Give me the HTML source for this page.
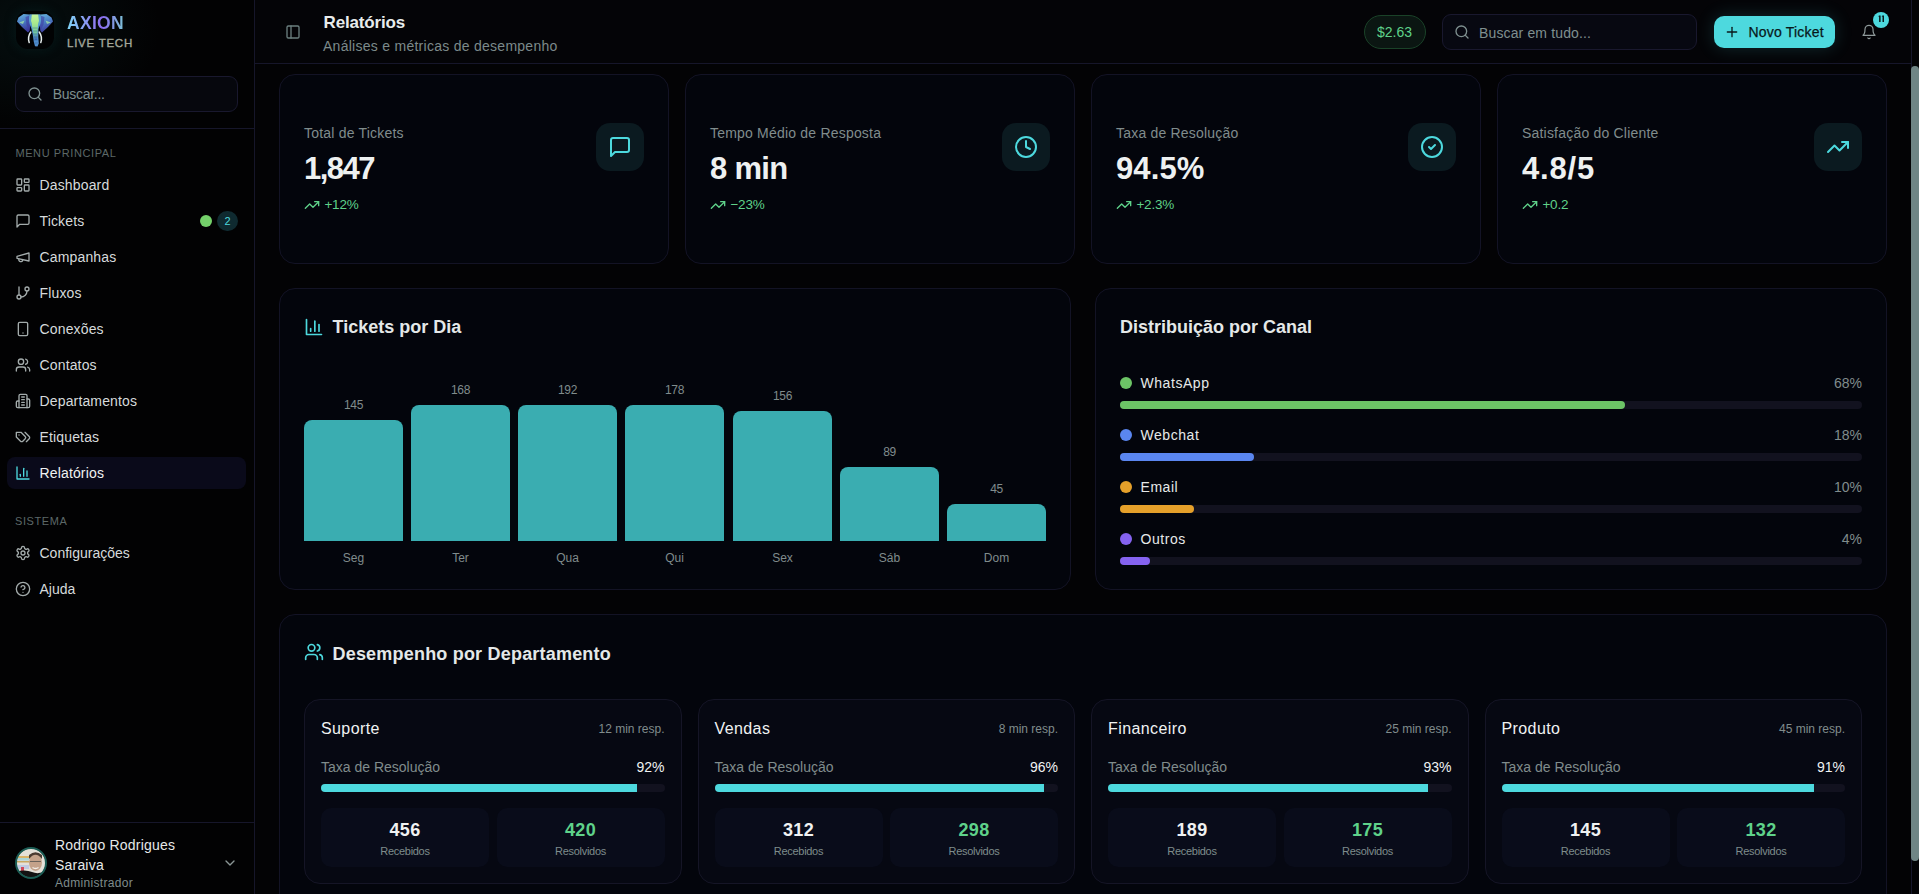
<!DOCTYPE html>
<html><head><meta charset="utf-8"><title>Relatórios</title>
<style>
html,body{margin:0;padding:0;}
body{width:1919px;height:894px;overflow:hidden;position:relative;background:#030305;font-family:"Liberation Sans",sans-serif;}
.t{position:absolute;line-height:1;white-space:nowrap;}
.r{position:absolute;}
</style></head><body>
<div class="r" style="left:0px;top:0px;width:255px;height:894px;background:#020203;border-right:1px solid #16162a;box-sizing:border-box;"></div>
<div class="r" style="left:0px;top:0px;width:254px;height:128px;background:radial-gradient(ellipse 130px 100px at 30px 28px, rgba(20,80,80,0.16), rgba(0,0,0,0) 100%);"></div>
<div class="r" style="left:0px;top:128px;width:254px;height:1px;background:#16162a;"></div>
<div class="r" style="left:16px;top:11px;width:38px;height:38px;background:#010203;border-radius:12px;box-shadow:0 0 12px rgba(10,50,50,0.35);"></div>
<svg class="r" style="left:14px;top:9px" width="42" height="42" viewBox="0 0 42 42">
<defs>
<linearGradient id="ear" x1="0" y1="0" x2="0.3" y2="1"><stop offset="0" stop-color="#6ab8e0"/><stop offset="0.5" stop-color="#4a7cc4"/><stop offset="1" stop-color="#3b3a9c"/></linearGradient>
<linearGradient id="head" x1="0" y1="0" x2="0" y2="1"><stop offset="0" stop-color="#c4f49a"/><stop offset="0.35" stop-color="#a8ea8c"/><stop offset="0.7" stop-color="#72c8a0"/><stop offset="1" stop-color="#3a5cb8"/></linearGradient>
</defs>
<path d="M9.5 5 L15.5 5.5 L16.5 14 L15.5 22 L14 23.5 L8 18 L3 12.5 L4.5 8.5 Z" fill="url(#ear)"/>
<path d="M32.5 5 L26.5 5.5 L25.5 14 L26.5 22 L28 23.5 L34 18 L39 12.5 L37.5 8.5 Z" fill="url(#ear)"/>
<path d="M11.5 8 L15.5 6.5 L16.5 14 L15.5 22 L12.5 15.5 Z" fill="#3e3aa0" opacity="0.6"/>
<path d="M30.5 8 L26.5 6.5 L25.5 14 L26.5 22 L29.5 15.5 Z" fill="#3e3aa0" opacity="0.6"/>
<path d="M5 13.5 L10.5 11.5 L9 15 Z" fill="#9ee0a8" opacity="0.8"/>
<path d="M37 13.5 L31.5 11.5 L33 15 Z" fill="#9ee0a8" opacity="0.8"/>
<path d="M15.5 5.5 L26.5 5.5 L27 11 L26 16 L24.5 20 L24.3 28 L24.8 34.5 L23.5 37.5 L21 37.2 L19.8 33 L18.8 26 L17.5 20 L16 16 L15 11 Z" fill="#4f8ccc"/>
<path d="M17.5 5.5 L24.5 5.5 L25 12 L24 17 L23.3 25 L23.2 31 L20.8 31 L19.5 25 L18 17 L17 12 Z" fill="url(#head)"/>
<path d="M15.5 5.5 L17.5 5.5 L17 12 L18 17 L16 16 L15 11 Z M26.5 5.5 L24.5 5.5 L25 12 L24 17 L26 16 L27 11 Z" fill="#5aa0d0"/>
<path d="M18.8 19h4.6M19 22h4.3M19.3 25h4M19.6 28h3.8M19.9 31h3.6M20.3 34h3.5" stroke="#2f5a90" stroke-width="0.8" opacity="0.55"/>
<path d="M16.8 23 Q13.3 28 15.2 33.5" stroke="#e4ecec" stroke-width="1.5" fill="none" stroke-linecap="round"/>
<path d="M25.2 23 Q28.7 28 26.8 33.5" stroke="#e4ecec" stroke-width="1.5" fill="none" stroke-linecap="round"/>
</svg>
<div class="t" style="left:67px;top:14.7px;font-size:17.5px;font-weight:bold;letter-spacing:0.3px;background:linear-gradient(90deg,#7fd6f6 0%,#8f7cf2 50%,#8a6cf0 62%,#7cc4d6 100%);-webkit-background-clip:text;background-clip:text;color:transparent;">AXION</div>
<div class="t" style="top:38.27px;font-size:11.5px;color:#a3a89c;font-weight:normal;letter-spacing:0.75px;left:67px;-webkit-text-stroke:0.35px #a3a89c;">LIVE TECH</div>
<div class="r" style="left:15px;top:76px;width:223px;height:36px;background:#06070d;border-radius:9px;border:1px solid #19182e;box-sizing:border-box;"></div>
<svg class="r" style="left:27px;top:86px" width="16" height="16" viewBox="0 0 24 24" fill="none" stroke="#7f9090" stroke-width="2" stroke-linecap="round" stroke-linejoin="round"><circle cx="11" cy="11" r="8"/><path d="m21 21-4.3-4.3"/></svg>
<div class="t" style="top:87.15px;font-size:14px;color:#7f8f8f;font-weight:normal;letter-spacing:-0.3px;left:52.8px;">Buscar...</div>
<div class="t" style="top:147.69px;font-size:11px;color:#5c6868;font-weight:normal;letter-spacing:0.6px;left:15.4px;">MENU PRINCIPAL</div>
<div class="r" style="left:7px;top:457px;width:239px;height:32px;background:#0a0a1a;border-radius:8px;"></div>
<svg class="r" style="left:15px;top:177px" width="16" height="16" viewBox="0 0 24 24" fill="none" stroke="#a3abab" stroke-width="2" stroke-linecap="round" stroke-linejoin="round"><rect width="7" height="9" x="3" y="3" rx="1"/><rect width="7" height="5" x="14" y="3" rx="1"/><rect width="7" height="9" x="14" y="12" rx="1"/><rect width="7" height="5" x="3" y="16" rx="1"/></svg>
<div class="t" style="top:178.35px;font-size:14px;color:#d6dadb;font-weight:normal;letter-spacing:0.15px;left:39.5px;">Dashboard</div>
<svg class="r" style="left:15px;top:213px" width="16" height="16" viewBox="0 0 24 24" fill="none" stroke="#a3abab" stroke-width="2" stroke-linecap="round" stroke-linejoin="round"><path d="M21 15a2 2 0 0 1-2 2H7l-4 4V5a2 2 0 0 1 2-2h14a2 2 0 0 1 2 2z"/></svg>
<div class="t" style="top:214.35px;font-size:14px;color:#d6dadb;font-weight:normal;letter-spacing:0.15px;left:39.5px;">Tickets</div>
<svg class="r" style="left:15px;top:249px" width="16" height="16" viewBox="0 0 24 24" fill="none" stroke="#a3abab" stroke-width="2" stroke-linecap="round" stroke-linejoin="round"><path d="m3 11 18-5v12L3 14v-3z"/><path d="M11.6 16.8a3 3 0 1 1-5.8-1.6"/></svg>
<div class="t" style="top:250.35px;font-size:14px;color:#d6dadb;font-weight:normal;letter-spacing:0.15px;left:39.5px;">Campanhas</div>
<svg class="r" style="left:15px;top:285px" width="16" height="16" viewBox="0 0 24 24" fill="none" stroke="#a3abab" stroke-width="2" stroke-linecap="round" stroke-linejoin="round"><line x1="6" x2="6" y1="3" y2="15"/><circle cx="18" cy="6" r="3"/><circle cx="6" cy="18" r="3"/><path d="M18 9a9 9 0 0 1-9 9"/></svg>
<div class="t" style="top:286.35px;font-size:14px;color:#d6dadb;font-weight:normal;letter-spacing:0.15px;left:39.5px;">Fluxos</div>
<svg class="r" style="left:15px;top:321px" width="16" height="16" viewBox="0 0 24 24" fill="none" stroke="#a3abab" stroke-width="2" stroke-linecap="round" stroke-linejoin="round"><rect width="14" height="20" x="5" y="2" rx="2" ry="2"/><path d="M12 18h.01"/></svg>
<div class="t" style="top:322.35px;font-size:14px;color:#d6dadb;font-weight:normal;letter-spacing:0.15px;left:39.5px;">Conexões</div>
<svg class="r" style="left:15px;top:357px" width="16" height="16" viewBox="0 0 24 24" fill="none" stroke="#a3abab" stroke-width="2" stroke-linecap="round" stroke-linejoin="round"><path d="M16 21v-2a4 4 0 0 0-4-4H6a4 4 0 0 0-4 4v2"/><circle cx="9" cy="7" r="4"/><path d="M22 21v-2a4 4 0 0 0-3-3.87"/><path d="M16 3.13a4 4 0 0 1 0 7.75"/></svg>
<div class="t" style="top:358.35px;font-size:14px;color:#d6dadb;font-weight:normal;letter-spacing:0.15px;left:39.5px;">Contatos</div>
<svg class="r" style="left:15px;top:393px" width="16" height="16" viewBox="0 0 24 24" fill="none" stroke="#a3abab" stroke-width="2" stroke-linecap="round" stroke-linejoin="round"><path d="M6 22V4a2 2 0 0 1 2-2h8a2 2 0 0 1 2 2v18Z"/><path d="M6 12H4a2 2 0 0 0-2 2v6a2 2 0 0 0 2 2h2"/><path d="M18 9h2a2 2 0 0 1 2 2v9a2 2 0 0 1-2 2h-2"/><path d="M10 6h4"/><path d="M10 10h4"/><path d="M10 14h4"/><path d="M10 18h4"/></svg>
<div class="t" style="top:394.35px;font-size:14px;color:#d6dadb;font-weight:normal;letter-spacing:0.15px;left:39.5px;">Departamentos</div>
<svg class="r" style="left:15px;top:429px" width="16" height="16" viewBox="0 0 24 24" fill="none" stroke="#a3abab" stroke-width="2" stroke-linecap="round" stroke-linejoin="round"><path d="M9 5H2v7l6.29 6.29c.94.94 2.48.94 3.42 0l3.58-3.58c.94-.94.94-2.48 0-3.42L9 5Z"/><path d="M6 9.01V9"/><path d="m15 5 6.3 6.3a2.4 2.4 0 0 1 0 3.4L17 19"/></svg>
<div class="t" style="top:430.35px;font-size:14px;color:#d6dadb;font-weight:normal;letter-spacing:0.15px;left:39.5px;">Etiquetas</div>
<svg class="r" style="left:15px;top:465px" width="16" height="16" viewBox="0 0 24 24" fill="none" stroke="#4dd9de" stroke-width="2" stroke-linecap="round" stroke-linejoin="round"><path d="M3 3v18h18"/><path d="M18 17V9"/><path d="M13 17V5"/><path d="M8 17v-3"/></svg>
<div class="t" style="top:466.35px;font-size:14px;color:#f0f2f2;font-weight:normal;letter-spacing:0.15px;left:39.5px;">Relatórios</div>
<div class="r" style="left:200px;top:215px;width:12px;height:12px;background:#74d06a;border-radius:6px;"></div>
<div class="r" style="left:217px;top:211px;width:21px;height:20px;background:#0f2a30;border-radius:10px;"></div>
<div class="t" style="top:215.69px;font-size:11px;color:#4dd9de;font-weight:normal;left:217.50px;width:20px;text-align:center;">2</div>
<div class="t" style="top:516.09px;font-size:11px;color:#5c6868;font-weight:normal;letter-spacing:0.6px;left:15px;">SISTEMA</div>
<svg class="r" style="left:15px;top:545px" width="16" height="16" viewBox="0 0 24 24" fill="none" stroke="#a3abab" stroke-width="2" stroke-linecap="round" stroke-linejoin="round"><path d="M12.22 2h-.44a2 2 0 0 0-2 2v.18a2 2 0 0 1-1 1.73l-.43.25a2 2 0 0 1-2 0l-.15-.08a2 2 0 0 0-2.73.73l-.22.38a2 2 0 0 0 .73 2.73l.15.1a2 2 0 0 1 1 1.72v.51a2 2 0 0 1-1 1.74l-.15.09a2 2 0 0 0-.73 2.73l.22.38a2 2 0 0 0 2.73.73l.15-.08a2 2 0 0 1 2 0l.43.25a2 2 0 0 1 1 1.73V20a2 2 0 0 0 2 2h.44a2 2 0 0 0 2-2v-.18a2 2 0 0 1 1-1.73l.43-.25a2 2 0 0 1 2 0l.15.08a2 2 0 0 0 2.73-.73l.22-.39a2 2 0 0 0-.73-2.73l-.15-.08a2 2 0 0 1-1-1.74v-.5a2 2 0 0 1 1-1.74l.15-.09a2 2 0 0 0 .73-2.73l-.22-.38a2 2 0 0 0-2.73-.73l-.15.08a2 2 0 0 1-2 0l-.43-.25a2 2 0 0 1-1-1.73V4a2 2 0 0 0-2-2z"/><circle cx="12" cy="12" r="3"/></svg>
<div class="t" style="top:545.95px;font-size:14px;color:#d6dadb;font-weight:normal;left:39.5px;">Configurações</div>
<svg class="r" style="left:15px;top:581px" width="16" height="16" viewBox="0 0 24 24" fill="none" stroke="#a3abab" stroke-width="2" stroke-linecap="round" stroke-linejoin="round"><circle cx="12" cy="12" r="10"/><path d="M9.09 9a3 3 0 0 1 5.83 1c0 2-3 3-3 3"/><path d="M12 17h.01"/></svg>
<div class="t" style="top:581.95px;font-size:14px;color:#d6dadb;font-weight:normal;left:39.5px;">Ajuda</div>
<div class="r" style="left:0px;top:822px;width:254px;height:1px;background:#16162a;"></div>
<svg class="r" style="left:15px;top:847px" width="32" height="32" viewBox="0 0 32 32">
<defs><clipPath id="av"><circle cx="16" cy="16" r="14.5"/></clipPath></defs>
<g clip-path="url(#av)">
<rect width="32" height="32" fill="#e4e0d8"/>
<rect x="0" y="9" width="16" height="2" fill="#d9b46a"/>
<rect x="3" y="11" width="11" height="2.5" fill="#8fd0d8" opacity="0.7"/>
<rect x="0" y="14" width="16" height="1.5" fill="#c9a860"/>
<rect x="2" y="18" width="12" height="4" fill="#b8c4e4" opacity="0.8"/>
<rect x="6" y="20" width="3" height="5" fill="#d04858"/>
<ellipse cx="20.5" cy="15.5" rx="6.5" ry="8.5" fill="#c4a28a"/>
<path d="M14 12 Q20.5 3.5 27 12 L27 8 Q20.5 2.5 14 8 Z" fill="#4a3a30"/>
<path d="M15 14.5h11" stroke="#6a625a" stroke-width="1"/>
<path d="M17.5 20.5 Q20.5 22.5 23.5 20.5" stroke="#f4f0ea" stroke-width="1.3" fill="none"/>
<path d="M0 25 Q10 22 17 25 Q24 28 32 23 L32 32 L0 32 Z" fill="#131313"/>
</g>
<circle cx="16" cy="16" r="15" fill="none" stroke="#1b5c54" stroke-width="2"/>
</svg>
<div class="t" style="top:837.65px;font-size:14px;color:#e6e9e9;font-weight:normal;letter-spacing:0.2px;left:55px;">Rodrigo Rodrigues</div>
<div class="t" style="top:857.95px;font-size:14px;color:#e6e9e9;font-weight:normal;letter-spacing:0.2px;left:55px;">Saraiva</div>
<div class="t" style="top:876.54px;font-size:12px;color:#7f8c8c;font-weight:normal;letter-spacing:0.3px;left:55px;">Administrador</div>
<svg class="r" style="left:222px;top:855px" width="16" height="16" viewBox="0 0 24 24" fill="none" stroke="#8a9696" stroke-width="2" stroke-linecap="round" stroke-linejoin="round"><path d="m6 9 6 6 6-6"/></svg>
<div class="r" style="left:255px;top:0px;width:1656px;height:63px;background:#040407;"></div>
<div class="r" style="left:255px;top:63px;width:1656px;height:1px;background:#16162a;"></div>
<div class="r" style="left:1911px;top:0px;width:1px;height:894px;background:#16162a;"></div>
<svg class="r" style="left:285px;top:24px" width="16" height="16" viewBox="0 0 24 24" fill="none" stroke="#6b7f7f" stroke-width="2" stroke-linecap="round" stroke-linejoin="round"><rect width="18" height="18" x="3" y="3" rx="2"/><path d="M9 3v18"/></svg>
<div class="t" style="top:14.11px;font-size:17px;color:#e8ecec;font-weight:bold;letter-spacing:-0.15px;left:323.5px;">Relatórios</div>
<div class="t" style="top:39.05px;font-size:14px;color:#7c8a8a;font-weight:normal;letter-spacing:0.27px;left:323px;">Análises e métricas de desempenho</div>
<div class="r" style="left:1364px;top:15px;width:62px;height:34px;background:#0b1612;border-radius:17px;border:1px solid #1a4228;box-sizing:border-box;"></div>
<div class="t" style="top:25.35px;font-size:14px;color:#5fd28a;font-weight:normal;left:1377px;">$2.63</div>
<div class="r" style="left:1442px;top:14px;width:255px;height:36px;background:#070811;border-radius:9px;border:1px solid #19182e;box-sizing:border-box;"></div>
<svg class="r" style="left:1454px;top:24px" width="16" height="16" viewBox="0 0 24 24" fill="none" stroke="#7f9090" stroke-width="2" stroke-linecap="round" stroke-linejoin="round"><circle cx="11" cy="11" r="8"/><path d="m21 21-4.3-4.3"/></svg>
<div class="t" style="top:26.15px;font-size:14px;color:#7f8f8f;font-weight:normal;letter-spacing:0.14px;left:1479px;">Buscar em tudo...</div>
<div class="r" style="left:1714px;top:16px;width:121px;height:32px;background:#4dd9de;border-radius:10px;box-shadow:0 0 18px rgba(77,217,222,0.18);"></div>
<svg class="r" style="left:1724px;top:24px" width="16" height="16" viewBox="0 0 24 24" fill="none" stroke="#0a1a1c" stroke-width="2" stroke-linecap="round" stroke-linejoin="round"><path d="M5 12h14"/><path d="M12 5v14"/></svg>
<div class="t" style="top:24.85px;font-size:14px;color:#08181a;font-weight:normal;letter-spacing:0.2px;left:1748.5px;-webkit-text-stroke:0.25px #08181a;">Novo Ticket</div>
<svg class="r" style="left:1861px;top:24px" width="16" height="16" viewBox="0 0 24 24" fill="none" stroke="#8f9a9a" stroke-width="1.8" stroke-linecap="round" stroke-linejoin="round"><path d="M6 8a6 6 0 0 1 12 0c0 7 3 9 3 9H3s3-2 3-9"/><path d="M10.3 21a1.94 1.94 0 0 0 3.4 0"/></svg>
<div class="r" style="left:1873px;top:12px;width:16px;height:16px;background:#4dd9de;border-radius:8px;"></div>
<svg class="r" style="left:1873px;top:12px" width="16" height="16" viewBox="0 0 16 16"><path d="M6.1 3.5 h1.5 v6.4 h-1.5 z M5.2 4.3 l0.9 -0.8 v1.3 z M9.5 3.5 h1.5 v6.4 h-1.5 z M8.6 4.3 l0.9 -0.8 v1.3 z" fill="#0a1a1c"/></svg>
<div class="r" style="left:255px;top:64px;width:1656px;height:830px;background:#030305;"></div>
<div class="r" style="left:1911px;top:66px;width:8px;height:795px;background:#6f8585;border-radius:4px;"></div>
<div class="r" style="left:279px;top:74px;width:390px;height:190px;background:#03050c;border-radius:16px;border:1px solid #131325;box-sizing:border-box;"></div>
<div class="t" style="top:126.05px;font-size:14px;color:#808c8c;font-weight:normal;letter-spacing:0.2px;left:304px;">Total de Tickets</div>
<div class="t" style="top:153.26px;font-size:31px;color:#eef1f1;font-weight:bold;letter-spacing:-1.5px;left:304px;">1,847</div>
<svg class="r" style="left:304px;top:197px" width="16" height="16" viewBox="0 0 24 24" fill="none" stroke="#5fd28a" stroke-width="2" stroke-linecap="round" stroke-linejoin="round"><polyline points="22 7 13.5 15.5 8.5 10.5 2 17"/><polyline points="16 7 22 7 22 13"/></svg>
<div class="t" style="top:198.37px;font-size:13.5px;color:#5fd28a;font-weight:normal;letter-spacing:-0.2px;left:324.4px;">+12%</div>
<div class="r" style="left:596px;top:123px;width:48px;height:48px;background:#0b1a20;border-radius:14px;"></div>
<svg class="r" style="left:608px;top:135px" width="24" height="24" viewBox="0 0 24 24" fill="none" stroke="#4dd9de" stroke-width="2" stroke-linecap="round" stroke-linejoin="round"><path d="M21 15a2 2 0 0 1-2 2H7l-4 4V5a2 2 0 0 1 2-2h14a2 2 0 0 1 2 2z"/></svg>
<div class="r" style="left:685px;top:74px;width:390px;height:190px;background:#03050c;border-radius:16px;border:1px solid #131325;box-sizing:border-box;"></div>
<div class="t" style="top:126.05px;font-size:14px;color:#808c8c;font-weight:normal;letter-spacing:0.2px;left:710px;">Tempo Médio de Resposta</div>
<div class="t" style="top:153.26px;font-size:31px;color:#eef1f1;font-weight:bold;letter-spacing:-0.7px;left:710px;">8 min</div>
<svg class="r" style="left:710px;top:197px" width="16" height="16" viewBox="0 0 24 24" fill="none" stroke="#5fd28a" stroke-width="2" stroke-linecap="round" stroke-linejoin="round"><polyline points="22 7 13.5 15.5 8.5 10.5 2 17"/><polyline points="16 7 22 7 22 13"/></svg>
<div class="t" style="top:198.37px;font-size:13.5px;color:#5fd28a;font-weight:normal;letter-spacing:-0.2px;left:730.4px;">−23%</div>
<div class="r" style="left:1002px;top:123px;width:48px;height:48px;background:#0b1a20;border-radius:14px;"></div>
<svg class="r" style="left:1014px;top:135px" width="24" height="24" viewBox="0 0 24 24" fill="none" stroke="#4dd9de" stroke-width="2" stroke-linecap="round" stroke-linejoin="round"><circle cx="12" cy="12" r="10"/><polyline points="12 6 12 12 16 14"/></svg>
<div class="r" style="left:1091px;top:74px;width:390px;height:190px;background:#03050c;border-radius:16px;border:1px solid #131325;box-sizing:border-box;"></div>
<div class="t" style="top:126.05px;font-size:14px;color:#808c8c;font-weight:normal;letter-spacing:0.2px;left:1116px;">Taxa de Resolução</div>
<div class="t" style="top:153.26px;font-size:31px;color:#eef1f1;font-weight:bold;letter-spacing:0.1px;left:1116px;">94.5%</div>
<svg class="r" style="left:1116px;top:197px" width="16" height="16" viewBox="0 0 24 24" fill="none" stroke="#5fd28a" stroke-width="2" stroke-linecap="round" stroke-linejoin="round"><polyline points="22 7 13.5 15.5 8.5 10.5 2 17"/><polyline points="16 7 22 7 22 13"/></svg>
<div class="t" style="top:198.37px;font-size:13.5px;color:#5fd28a;font-weight:normal;letter-spacing:-0.2px;left:1136.4px;">+2.3%</div>
<div class="r" style="left:1408px;top:123px;width:48px;height:48px;background:#0b1a20;border-radius:14px;"></div>
<svg class="r" style="left:1420px;top:135px" width="24" height="24" viewBox="0 0 24 24" fill="none" stroke="#4dd9de" stroke-width="2" stroke-linecap="round" stroke-linejoin="round"><circle cx="12" cy="12" r="10"/><path d="m9 12 2 2 4-4"/></svg>
<div class="r" style="left:1497px;top:74px;width:390px;height:190px;background:#03050c;border-radius:16px;border:1px solid #131325;box-sizing:border-box;"></div>
<div class="t" style="top:126.05px;font-size:14px;color:#808c8c;font-weight:normal;letter-spacing:0.2px;left:1522px;">Satisfação do Cliente</div>
<div class="t" style="top:153.26px;font-size:31px;color:#eef1f1;font-weight:bold;letter-spacing:0.8px;left:1522px;">4.8/5</div>
<svg class="r" style="left:1522px;top:197px" width="16" height="16" viewBox="0 0 24 24" fill="none" stroke="#5fd28a" stroke-width="2" stroke-linecap="round" stroke-linejoin="round"><polyline points="22 7 13.5 15.5 8.5 10.5 2 17"/><polyline points="16 7 22 7 22 13"/></svg>
<div class="t" style="top:198.37px;font-size:13.5px;color:#5fd28a;font-weight:normal;letter-spacing:-0.2px;left:1542.4px;">+0.2</div>
<div class="r" style="left:1814px;top:123px;width:48px;height:48px;background:#0b1a20;border-radius:14px;"></div>
<svg class="r" style="left:1826px;top:135px" width="24" height="24" viewBox="0 0 24 24" fill="none" stroke="#4dd9de" stroke-width="2" stroke-linecap="round" stroke-linejoin="round"><polyline points="22 7 13.5 15.5 8.5 10.5 2 17"/><polyline points="16 7 22 7 22 13"/></svg>
<div class="r" style="left:279px;top:288px;width:792px;height:302px;background:#03050c;border-radius:16px;border:1px solid #131325;box-sizing:border-box;"></div>
<svg class="r" style="left:304px;top:317px" width="20" height="20" viewBox="0 0 24 24" fill="none" stroke="#4dd9de" stroke-width="2" stroke-linecap="round" stroke-linejoin="round"><path d="M3 3v18h18"/><path d="M18 17V9"/><path d="M13 17V5"/><path d="M8 17v-3"/></svg>
<div class="t" style="top:317.66px;font-size:18px;color:#e4e8e8;font-weight:bold;left:332.6px;">Tickets por Dia</div>
<div class="r" style="left:304px;top:420px;width:99px;height:121px;background:#3aadb1;border-radius:8px 8px 0 0;"></div>
<div class="t" style="top:398.84px;font-size:12px;color:#808c8c;font-weight:normal;letter-spacing:-0.3px;left:304.00px;width:99px;text-align:center;">145</div>
<div class="t" style="top:551.84px;font-size:12px;color:#808c8c;font-weight:normal;left:304.00px;width:99px;text-align:center;">Seg</div>
<div class="r" style="left:411px;top:405px;width:99px;height:136px;background:#3aadb1;border-radius:8px 8px 0 0;"></div>
<div class="t" style="top:383.84px;font-size:12px;color:#808c8c;font-weight:normal;letter-spacing:-0.3px;left:411.00px;width:99px;text-align:center;">168</div>
<div class="t" style="top:551.84px;font-size:12px;color:#808c8c;font-weight:normal;left:411.00px;width:99px;text-align:center;">Ter</div>
<div class="r" style="left:518px;top:405px;width:99px;height:136px;background:#3aadb1;border-radius:8px 8px 0 0;"></div>
<div class="t" style="top:383.84px;font-size:12px;color:#808c8c;font-weight:normal;letter-spacing:-0.3px;left:518.00px;width:99px;text-align:center;">192</div>
<div class="t" style="top:551.84px;font-size:12px;color:#808c8c;font-weight:normal;left:518.00px;width:99px;text-align:center;">Qua</div>
<div class="r" style="left:625px;top:405px;width:99px;height:136px;background:#3aadb1;border-radius:8px 8px 0 0;"></div>
<div class="t" style="top:383.84px;font-size:12px;color:#808c8c;font-weight:normal;letter-spacing:-0.3px;left:625.00px;width:99px;text-align:center;">178</div>
<div class="t" style="top:551.84px;font-size:12px;color:#808c8c;font-weight:normal;left:625.00px;width:99px;text-align:center;">Qui</div>
<div class="r" style="left:733px;top:411px;width:99px;height:130px;background:#3aadb1;border-radius:8px 8px 0 0;"></div>
<div class="t" style="top:389.84px;font-size:12px;color:#808c8c;font-weight:normal;letter-spacing:-0.3px;left:733.00px;width:99px;text-align:center;">156</div>
<div class="t" style="top:551.84px;font-size:12px;color:#808c8c;font-weight:normal;left:733.00px;width:99px;text-align:center;">Sex</div>
<div class="r" style="left:840px;top:467px;width:99px;height:74px;background:#3aadb1;border-radius:8px 8px 0 0;"></div>
<div class="t" style="top:445.84px;font-size:12px;color:#808c8c;font-weight:normal;letter-spacing:-0.3px;left:840.00px;width:99px;text-align:center;">89</div>
<div class="t" style="top:551.84px;font-size:12px;color:#808c8c;font-weight:normal;left:840.00px;width:99px;text-align:center;">Sáb</div>
<div class="r" style="left:947px;top:504px;width:99px;height:37px;background:#3aadb1;border-radius:8px 8px 0 0;"></div>
<div class="t" style="top:482.84px;font-size:12px;color:#808c8c;font-weight:normal;letter-spacing:-0.3px;left:947.00px;width:99px;text-align:center;">45</div>
<div class="t" style="top:551.84px;font-size:12px;color:#808c8c;font-weight:normal;left:947.00px;width:99px;text-align:center;">Dom</div>
<div class="r" style="left:1095px;top:288px;width:792px;height:302px;background:#03050c;border-radius:16px;border:1px solid #131325;box-sizing:border-box;"></div>
<div class="t" style="top:317.76px;font-size:18px;color:#e4e8e8;font-weight:bold;left:1120px;">Distribuição por Canal</div>
<div class="r" style="left:1120px;top:377px;width:12px;height:12px;background:#6cc466;border-radius:6px;"></div>
<div class="t" style="top:376.15px;font-size:14px;color:#e6e9e9;font-weight:normal;letter-spacing:0.55px;left:1140.5px;">WhatsApp</div>
<div class="t" style="top:376.15px;font-size:14px;color:#808c8c;font-weight:normal;right:57px;text-align:right;">68%</div>
<div class="r" style="left:1120px;top:401px;width:742px;height:8px;background:#12121f;border-radius:4px;"></div>
<div class="r" style="left:1120px;top:401px;width:504.6px;height:8px;background:#6cc466;border-radius:4px;"></div>
<div class="r" style="left:1120px;top:429px;width:12px;height:12px;background:#5a86f0;border-radius:6px;"></div>
<div class="t" style="top:428.15px;font-size:14px;color:#e6e9e9;font-weight:normal;letter-spacing:0.55px;left:1140.5px;">Webchat</div>
<div class="t" style="top:428.15px;font-size:14px;color:#808c8c;font-weight:normal;right:57px;text-align:right;">18%</div>
<div class="r" style="left:1120px;top:453px;width:742px;height:8px;background:#12121f;border-radius:4px;"></div>
<div class="r" style="left:1120px;top:453px;width:133.6px;height:8px;background:#5a86f0;border-radius:4px;"></div>
<div class="r" style="left:1120px;top:481px;width:12px;height:12px;background:#e5a02a;border-radius:6px;"></div>
<div class="t" style="top:480.15px;font-size:14px;color:#e6e9e9;font-weight:normal;letter-spacing:0.55px;left:1140.5px;">Email</div>
<div class="t" style="top:480.15px;font-size:14px;color:#808c8c;font-weight:normal;right:57px;text-align:right;">10%</div>
<div class="r" style="left:1120px;top:505px;width:742px;height:8px;background:#12121f;border-radius:4px;"></div>
<div class="r" style="left:1120px;top:505px;width:74.2px;height:8px;background:#e5a02a;border-radius:4px;"></div>
<div class="r" style="left:1120px;top:533px;width:12px;height:12px;background:#8563f0;border-radius:6px;"></div>
<div class="t" style="top:532.15px;font-size:14px;color:#e6e9e9;font-weight:normal;letter-spacing:0.55px;left:1140.5px;">Outros</div>
<div class="t" style="top:532.15px;font-size:14px;color:#808c8c;font-weight:normal;right:57px;text-align:right;">4%</div>
<div class="r" style="left:1120px;top:557px;width:742px;height:8px;background:#12121f;border-radius:4px;"></div>
<div class="r" style="left:1120px;top:557px;width:29.7px;height:8px;background:#8563f0;border-radius:4px;"></div>
<div class="r" style="left:279px;top:614px;width:1608px;height:320px;background:#03050c;border-radius:16px;border:1px solid #131325;box-sizing:border-box;"></div>
<svg class="r" style="left:304px;top:642px" width="20" height="20" viewBox="0 0 24 24" fill="none" stroke="#4dd9de" stroke-width="2" stroke-linecap="round" stroke-linejoin="round"><path d="M16 21v-2a4 4 0 0 0-4-4H6a4 4 0 0 0-4 4v2"/><circle cx="9" cy="7" r="4"/><path d="M22 21v-2a4 4 0 0 0-3-3.87"/><path d="M16 3.13a4 4 0 0 1 0 7.75"/></svg>
<div class="t" style="top:644.56px;font-size:18px;color:#e4e8e8;font-weight:bold;letter-spacing:0.2px;left:332.5px;">Desempenho por Departamento</div>
<div class="r" style="left:304.0px;top:699px;width:377.5px;height:185px;background:#060812;border-radius:16px;border:1px solid #151526;box-sizing:border-box;"></div>
<div class="t" style="top:721.46px;font-size:16px;color:#f0f2f2;font-weight:normal;letter-spacing:0.4px;left:321.0px;">Suporte</div>
<div class="t" style="top:723.34px;font-size:12px;color:#808c8c;font-weight:normal;right:1254.5px;text-align:right;">12 min resp.</div>
<div class="t" style="top:759.75px;font-size:14px;color:#808c8c;font-weight:normal;left:321.0px;">Taxa de Resolução</div>
<div class="t" style="top:759.75px;font-size:14px;color:#f0f2f2;font-weight:normal;right:1254.5px;text-align:right;">92%</div>
<div class="r" style="left:321.0px;top:784px;width:343.5px;height:8px;background:#12121f;border-radius:4px;overflow:hidden;"></div>
<div class="r" style="left:321.0px;top:784px;width:316.0px;height:8px;background:#4dd9de;border-radius:4px 0 0 4px;"></div>
<div class="r" style="left:321.0px;top:808px;width:168px;height:59px;background:#090c1a;border-radius:10px;"></div>
<div class="t" style="top:820.76px;font-size:18px;color:#f0f2f2;font-weight:bold;letter-spacing:0.4px;left:325.00px;width:160px;text-align:center;">456</div>
<div class="t" style="top:846.09px;font-size:11px;color:#7f8c8c;font-weight:normal;letter-spacing:-0.3px;left:325.00px;width:160px;text-align:center;">Recebidos</div>
<div class="r" style="left:496.5px;top:808px;width:168px;height:59px;background:#090c1a;border-radius:10px;"></div>
<div class="t" style="top:820.76px;font-size:18px;color:#5fd28a;font-weight:bold;letter-spacing:0.4px;left:500.50px;width:160px;text-align:center;">420</div>
<div class="t" style="top:846.09px;font-size:11px;color:#7f8c8c;font-weight:normal;letter-spacing:-0.3px;left:500.50px;width:160px;text-align:center;">Resolvidos</div>
<div class="r" style="left:697.5px;top:699px;width:377.5px;height:185px;background:#060812;border-radius:16px;border:1px solid #151526;box-sizing:border-box;"></div>
<div class="t" style="top:721.46px;font-size:16px;color:#f0f2f2;font-weight:normal;letter-spacing:0.4px;left:714.5px;">Vendas</div>
<div class="t" style="top:723.34px;font-size:12px;color:#808c8c;font-weight:normal;right:861.0px;text-align:right;">8 min resp.</div>
<div class="t" style="top:759.75px;font-size:14px;color:#808c8c;font-weight:normal;left:714.5px;">Taxa de Resolução</div>
<div class="t" style="top:759.75px;font-size:14px;color:#f0f2f2;font-weight:normal;right:861.0px;text-align:right;">96%</div>
<div class="r" style="left:714.5px;top:784px;width:343.5px;height:8px;background:#12121f;border-radius:4px;overflow:hidden;"></div>
<div class="r" style="left:714.5px;top:784px;width:329.8px;height:8px;background:#4dd9de;border-radius:4px 0 0 4px;"></div>
<div class="r" style="left:714.5px;top:808px;width:168px;height:59px;background:#090c1a;border-radius:10px;"></div>
<div class="t" style="top:820.76px;font-size:18px;color:#f0f2f2;font-weight:bold;letter-spacing:0.4px;left:718.50px;width:160px;text-align:center;">312</div>
<div class="t" style="top:846.09px;font-size:11px;color:#7f8c8c;font-weight:normal;letter-spacing:-0.3px;left:718.50px;width:160px;text-align:center;">Recebidos</div>
<div class="r" style="left:890.0px;top:808px;width:168px;height:59px;background:#090c1a;border-radius:10px;"></div>
<div class="t" style="top:820.76px;font-size:18px;color:#5fd28a;font-weight:bold;letter-spacing:0.4px;left:894.00px;width:160px;text-align:center;">298</div>
<div class="t" style="top:846.09px;font-size:11px;color:#7f8c8c;font-weight:normal;letter-spacing:-0.3px;left:894.00px;width:160px;text-align:center;">Resolvidos</div>
<div class="r" style="left:1091.0px;top:699px;width:377.5px;height:185px;background:#060812;border-radius:16px;border:1px solid #151526;box-sizing:border-box;"></div>
<div class="t" style="top:721.46px;font-size:16px;color:#f0f2f2;font-weight:normal;letter-spacing:0.4px;left:1108.0px;">Financeiro</div>
<div class="t" style="top:723.34px;font-size:12px;color:#808c8c;font-weight:normal;right:467.5px;text-align:right;">25 min resp.</div>
<div class="t" style="top:759.75px;font-size:14px;color:#808c8c;font-weight:normal;left:1108.0px;">Taxa de Resolução</div>
<div class="t" style="top:759.75px;font-size:14px;color:#f0f2f2;font-weight:normal;right:467.5px;text-align:right;">93%</div>
<div class="r" style="left:1108.0px;top:784px;width:343.5px;height:8px;background:#12121f;border-radius:4px;overflow:hidden;"></div>
<div class="r" style="left:1108.0px;top:784px;width:319.5px;height:8px;background:#4dd9de;border-radius:4px 0 0 4px;"></div>
<div class="r" style="left:1108.0px;top:808px;width:168px;height:59px;background:#090c1a;border-radius:10px;"></div>
<div class="t" style="top:820.76px;font-size:18px;color:#f0f2f2;font-weight:bold;letter-spacing:0.4px;left:1112.00px;width:160px;text-align:center;">189</div>
<div class="t" style="top:846.09px;font-size:11px;color:#7f8c8c;font-weight:normal;letter-spacing:-0.3px;left:1112.00px;width:160px;text-align:center;">Recebidos</div>
<div class="r" style="left:1283.5px;top:808px;width:168px;height:59px;background:#090c1a;border-radius:10px;"></div>
<div class="t" style="top:820.76px;font-size:18px;color:#5fd28a;font-weight:bold;letter-spacing:0.4px;left:1287.50px;width:160px;text-align:center;">175</div>
<div class="t" style="top:846.09px;font-size:11px;color:#7f8c8c;font-weight:normal;letter-spacing:-0.3px;left:1287.50px;width:160px;text-align:center;">Resolvidos</div>
<div class="r" style="left:1484.5px;top:699px;width:377.5px;height:185px;background:#060812;border-radius:16px;border:1px solid #151526;box-sizing:border-box;"></div>
<div class="t" style="top:721.46px;font-size:16px;color:#f0f2f2;font-weight:normal;letter-spacing:0.4px;left:1501.5px;">Produto</div>
<div class="t" style="top:723.34px;font-size:12px;color:#808c8c;font-weight:normal;right:74.0px;text-align:right;">45 min resp.</div>
<div class="t" style="top:759.75px;font-size:14px;color:#808c8c;font-weight:normal;left:1501.5px;">Taxa de Resolução</div>
<div class="t" style="top:759.75px;font-size:14px;color:#f0f2f2;font-weight:normal;right:74.0px;text-align:right;">91%</div>
<div class="r" style="left:1501.5px;top:784px;width:343.5px;height:8px;background:#12121f;border-radius:4px;overflow:hidden;"></div>
<div class="r" style="left:1501.5px;top:784px;width:312.6px;height:8px;background:#4dd9de;border-radius:4px 0 0 4px;"></div>
<div class="r" style="left:1501.5px;top:808px;width:168px;height:59px;background:#090c1a;border-radius:10px;"></div>
<div class="t" style="top:820.76px;font-size:18px;color:#f0f2f2;font-weight:bold;letter-spacing:0.4px;left:1505.50px;width:160px;text-align:center;">145</div>
<div class="t" style="top:846.09px;font-size:11px;color:#7f8c8c;font-weight:normal;letter-spacing:-0.3px;left:1505.50px;width:160px;text-align:center;">Recebidos</div>
<div class="r" style="left:1677.0px;top:808px;width:168px;height:59px;background:#090c1a;border-radius:10px;"></div>
<div class="t" style="top:820.76px;font-size:18px;color:#5fd28a;font-weight:bold;letter-spacing:0.4px;left:1681.00px;width:160px;text-align:center;">132</div>
<div class="t" style="top:846.09px;font-size:11px;color:#7f8c8c;font-weight:normal;letter-spacing:-0.3px;left:1681.00px;width:160px;text-align:center;">Resolvidos</div>
</body></html>
